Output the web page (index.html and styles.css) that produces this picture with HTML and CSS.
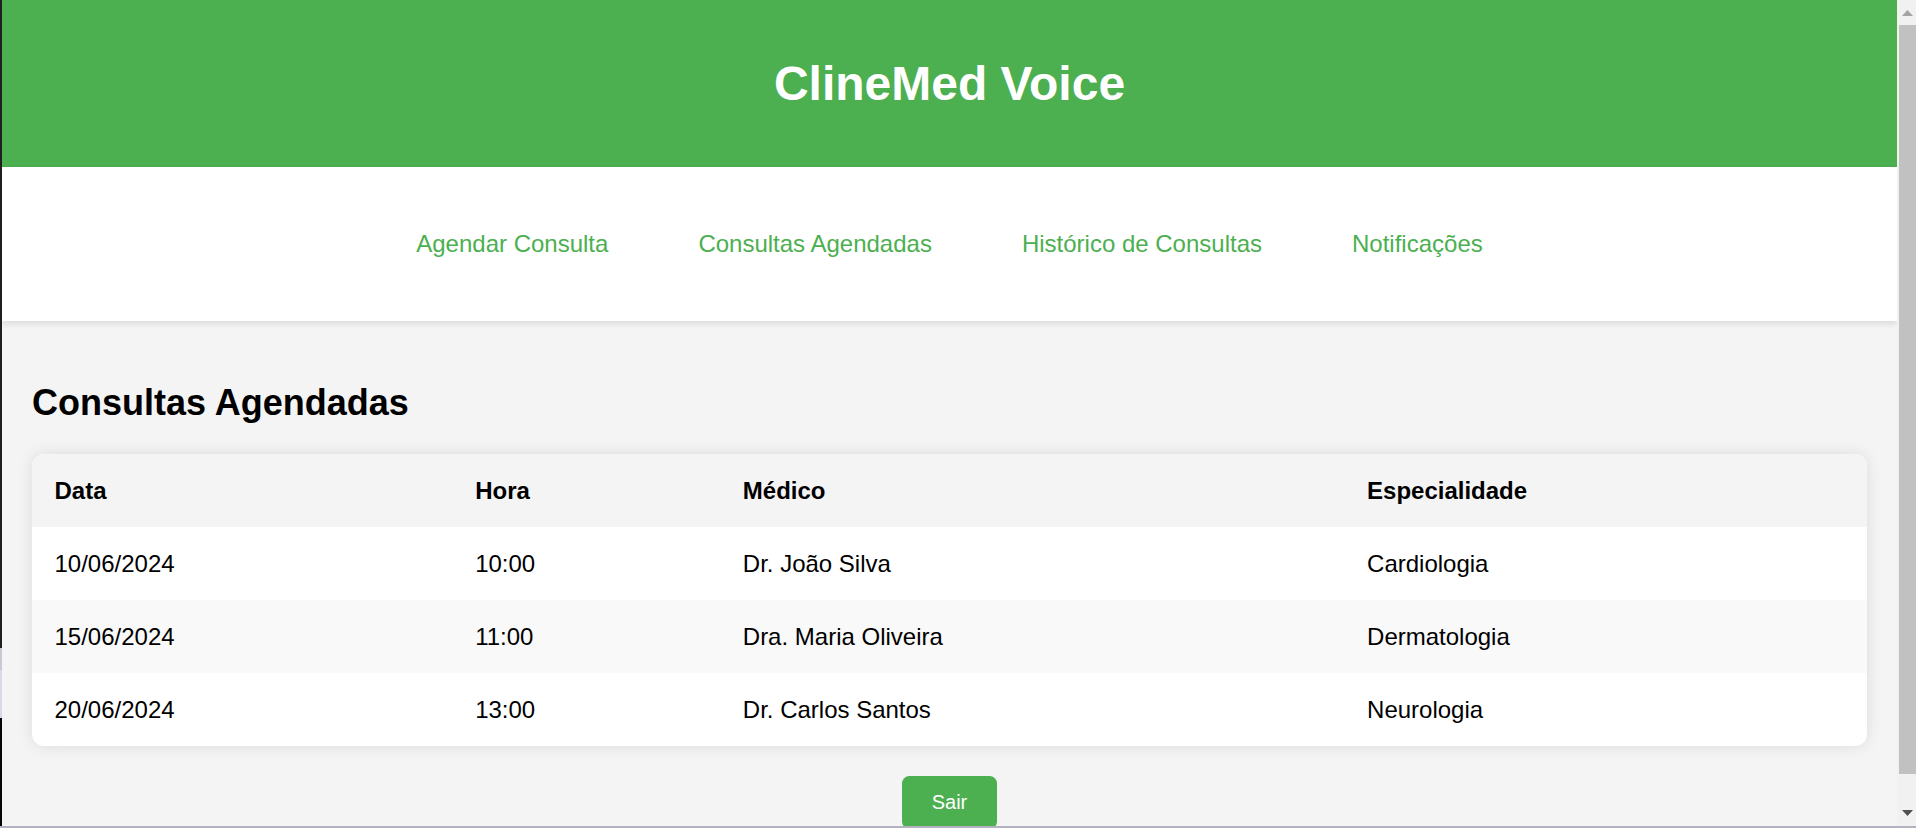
FILE: index.html
```html
<!DOCTYPE html>
<html lang="pt-BR">
<head>
<meta charset="utf-8">
<title>ClineMed Voice</title>
<link rel="stylesheet" href="styles.css">
</head>
<body>
<div class="window">
  <div class="edge">
    <div class="edge-dark"></div>
    <div class="edge-light"></div>
    <div class="edge-lavender"></div>
    <div class="edge-black"></div>
  </div>
  <div class="viewport">
    <header class="site-header">
      <h1 class="site-title">ClineMed Voice</h1>
    </header>
    <nav class="site-nav">
      <ul class="nav-list">
        <li><a class="nav-link" href="#">Agendar Consulta</a></li>
        <li><a class="nav-link" href="#">Consultas Agendadas</a></li>
        <li><a class="nav-link" href="#">Histórico de Consultas</a></li>
        <li><a class="nav-link" href="#">Notificações</a></li>
      </ul>
    </nav>
    <main class="content">
      <h2 class="section-title">Consultas Agendadas</h2>
      <div class="card">
        <table class="appointments">
          <thead>
            <tr>
              <th>Data</th>
              <th>Hora</th>
              <th>Médico</th>
              <th>Especialidade</th>
            </tr>
          </thead>
          <tbody>
            <tr>
              <td>10/06/2024</td>
              <td>10:00</td>
              <td>Dr. João Silva</td>
              <td>Cardiologia</td>
            </tr>
            <tr>
              <td>15/06/2024</td>
              <td>11:00</td>
              <td>Dra. Maria Oliveira</td>
              <td>Dermatologia</td>
            </tr>
            <tr>
              <td>20/06/2024</td>
              <td>13:00</td>
              <td>Dr. Carlos Santos</td>
              <td>Neurologia</td>
            </tr>
          </tbody>
        </table>
      </div>
      <div class="actions">
        <button class="btn-exit" type="button">Sair</button>
      </div>
    </main>
  </div>
  <div class="scrollbar">
    <div class="sb-button">
      <svg width="11" height="6" viewBox="0 0 11 6"><polygon points="0,6 11,6 5.5,0" fill="#a3a3a3"/></svg>
    </div>
    <div class="sb-thumb"></div>
    <div class="sb-track"></div>
    <div class="sb-button sb-button-down">
      <svg width="11" height="6" viewBox="0 0 11 6"><polygon points="0,0 11,0 5.5,6" fill="#505050"/></svg>
    </div>
  </div>
</div>
<div class="bottom-edge"></div>
</body>
</html>
```

FILE: styles.css
```css
* {
  box-sizing: border-box;
}

html, body {
  margin: 0;
  padding: 0;
  height: 828px;
  overflow: hidden;
  font-family: "Liberation Sans", Arial, sans-serif;
  background: #f4f4f4;
}

.window {
  display: flex;
  height: 826px;
}

.edge {
  width: 2px;
  display: flex;
  flex-direction: column;
}

.edge-dark {
  height: 648px;
  background: #1f1f1f;
}

.edge-light {
  height: 22px;
  background: #c9c9d2;
}

.edge-lavender {
  height: 48px;
  background: #d8d8e6;
}

.edge-black {
  flex: 1;
  background: #050505;
}

.viewport {
  flex: 1;
  overflow: hidden;
  background: #f4f4f4;
  display: flex;
  flex-direction: column;
}

.site-header {
  background: #4caf50;
  padding: 56px 0;
  text-align: center;
}

.site-title {
  margin: 0;
  color: #ffffff;
  font-size: 48px;
  font-weight: bold;
  line-height: 55px;
}

.site-nav {
  background: #ffffff;
  padding: 63px 0 64px;
  box-shadow: 0 3px 6px rgba(0, 0, 0, 0.1);
  position: relative;
  z-index: 1;
}

.nav-list {
  list-style: none;
  margin: 0;
  padding: 0;
  display: flex;
  justify-content: center;
  gap: 90px;
}

.nav-link {
  color: #4caf50;
  text-decoration: none;
  font-size: 24px;
  line-height: 27px;
}

.content {
  padding: 30px 30px 0;
}

.section-title {
  margin: 31px 0 30px;
  font-size: 36px;
  font-weight: bold;
  color: #000000;
  line-height: 42px;
}

.card {
  background: #ffffff;
  border-radius: 12px;
  box-shadow: 0 0 15px rgba(0, 0, 0, 0.1);
  overflow: hidden;
}

.appointments {
  width: 100%;
  border-collapse: collapse;
  font-size: 24px;
  color: #000000;
}

.appointments th,
.appointments td {
  padding: 22.5px;
  text-align: left;
  line-height: 28px;
}

.appointments th {
  background: #f4f4f4;
  font-weight: bold;
}

.appointments tbody tr:nth-child(even) td {
  background: #f9f9f9;
}

.actions {
  display: flex;
  justify-content: center;
  margin-top: 30px;
}

.btn-exit {
  background: #4caf50;
  color: #ffffff;
  border: none;
  border-radius: 7.5px;
  padding: 15px 30px;
  font-family: "Liberation Sans", Arial, sans-serif;
  font-size: 20px;
  line-height: 23px;
  cursor: pointer;
}

.scrollbar {
  width: 19px;
  background: #f1f1f1;
  display: flex;
  flex-direction: column;
  padding-left: 2px;
}

.sb-button {
  height: 25px;
  display: flex;
  align-items: center;
  justify-content: center;
}

.sb-button-down {
  height: 26px;
  align-items: center;
}

.sb-thumb {
  height: 749px;
  background: #c1c1c1;
}

.sb-track {
  flex: 1;
}

.bottom-edge {
  height: 2px;
  background: #b3b3c0;
}
```
